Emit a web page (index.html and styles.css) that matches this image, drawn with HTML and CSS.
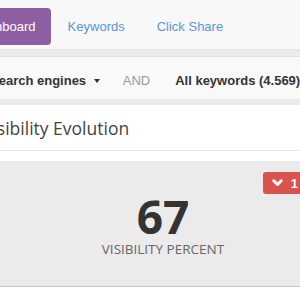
FILE: index.html
```html
<!DOCTYPE html>
<html lang="en">
<head>
  <meta charset="UTF-8" />
  <title>Dashboard</title>
  <link rel="stylesheet" href="styles.css">
</head>
<body>
  <div class="page">
    <!-- Menu principal -->
    <nav class="topnav">
      <a class="pill active" href="#">Dashboard</a>
      <a class="pill" href="#">Keywords</a>
      <a class="pill" href="#">Click Share</a>
    </nav>

    <div class="main">
      <!-- Filtros -->
      <div class="filterbar">
        <span class="filter strong">Search engines <span class="caret"></span></span>
        <span class="filter op">AND</span>
        <span class="filter strong">All keywords (4.569)</span>
      </div>

      <section class="panel">
        <h2 class="panel-title">Visibility Evolution</h2>
        <div class="panel-body"></div>
      </section>

      <div class="stat">
        <span class="badge">
          <svg width="11" height="8" viewBox="0 0 11 8"><polyline points="1.8,1.8 5.5,5.5 9.2,1.8" fill="none" stroke="#fff" stroke-width="3" stroke-linecap="round" stroke-linejoin="round"/></svg>
          1
        </span>
        <div class="stat-value">67</div>
        <div class="stat-label">VISIBILITY PERCENT</div>
      </div>
    </div>
  </div>
</body>
</html>
```

FILE: styles.css
```css
* {
  box-sizing: border-box;
}

body {
  margin: 0;
  background: #fff;
  overflow: hidden;
  font-family: 'Liberation Sans', Arial, sans-serif;
  color: #333;
}

.page {
  width: 416px;
  margin-left: -45px;
}

/* Menu */
.topnav {
  display: flex;
  align-items: flex-start;
  gap: 2px;
  height: 50px;
  padding: 8px 0 0 2px;
  background: #f8f8f8;
  border-bottom: 1px solid #e3e3e3;
}

.pill {
  display: block;
  height: 37px;
  line-height: 38px;
  padding: 0 15px;
  font-size: 13px;
  color: #5b95d6;
  text-decoration: none;
  border-radius: 4px;
}

.pill.active {
  background: #8d5ea1;
  color: #fff;
}

.main {
  background: #ebebeb;
  padding-top: 6px;
}

/* Filtros */
.filterbar {
  display: flex;
  align-items: center;
  height: 43px;
  padding: 5px 0 0 35px;
  background: #f9f9f9;
  border-top: 1px solid #e2e2e2;
  font-size: 13px;
}

.filter {
  margin-right: 23px;
}

.filter.strong {
  font-weight: bold;
  color: #333;
}

.filter.op {
  color: #999;
  margin-right: 25px;
}

.caret {
  display: inline-block;
  vertical-align: middle;
  margin-left: 4px;
  margin-top: -2px;
  border-top: 4px solid #333;
  border-left: 3px solid transparent;
  border-right: 3px solid transparent;
}

/* Painel */
.panel {
  margin-top: 6px;
  background: #fff;
  box-shadow: 0 1px 2px rgba(0, 0, 0, 0.25);
}

.panel-title {
  margin: 0;
  height: 46px;
  line-height: 46px;
  padding-left: 27px;
  font-family: 'Open Sans', sans-serif;
  font-size: 17.5px;
  font-weight: normal;
  color: #444;
  border-bottom: 1px solid #e6e6e6;
}

.panel-body {
  height: 10px;
}

.stat {
  position: relative;
  height: 126px;
  padding-top: 31px;
  text-align: center;
  background: #ebebeb;
  border-bottom: 1px solid #c8c8c8;
  font-family: 'Open Sans', sans-serif;
}

.stat-value {
  font-size: 46px;
  font-weight: bold;
  line-height: 48px;
  color: #333;
}

.stat-label {
  font-size: 13.5px;
  line-height: 18px;
  color: #666;
}

.badge {
  position: absolute;
  top: 11px;
  right: 65px;
  display: flex;
  align-items: center;
  gap: 8px;
  height: 22px;
  padding: 0 8px 0 9px;
  background: #d9534f;
  border-radius: 3px;
  color: #fff;
  font-family: 'Liberation Sans', Arial, sans-serif;
  font-size: 13px;
  font-weight: bold;
}
```
